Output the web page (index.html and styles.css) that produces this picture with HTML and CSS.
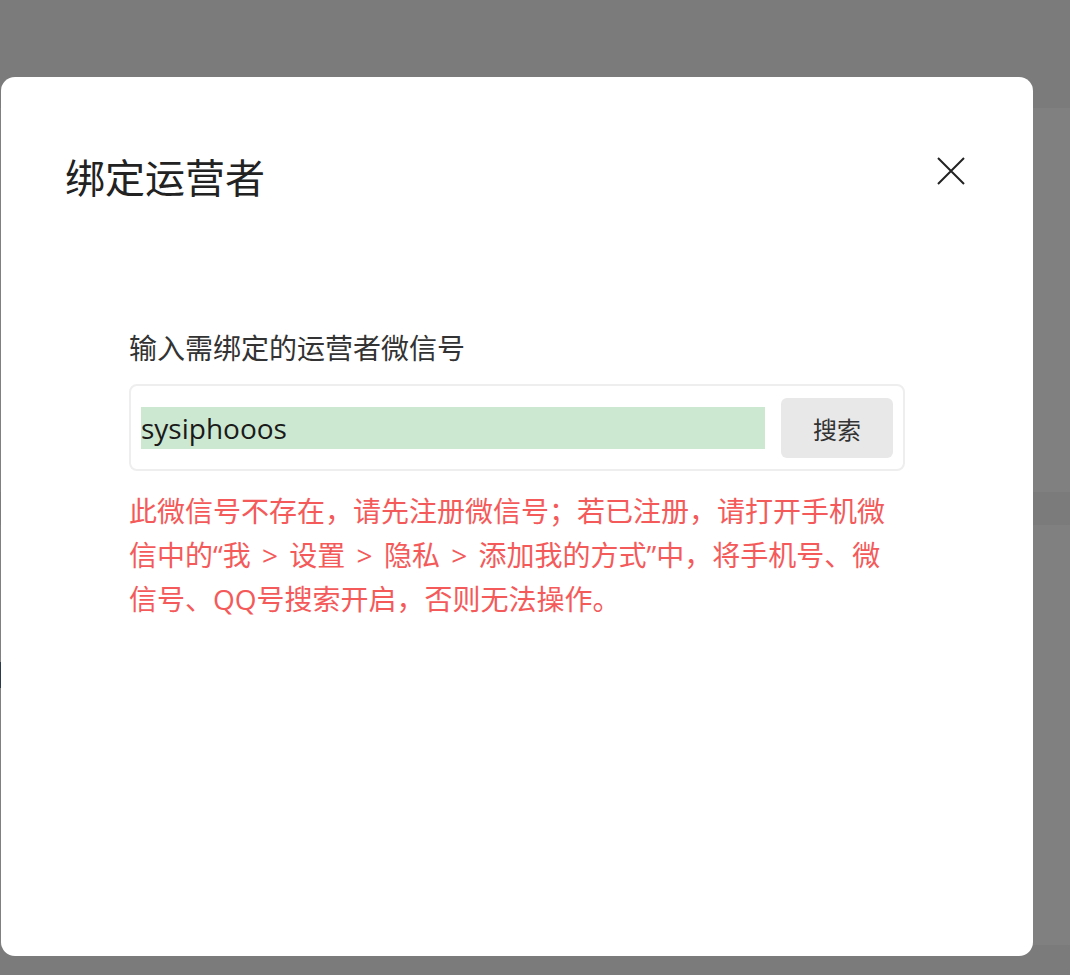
FILE: index.html
```html
<!DOCTYPE html>
<html lang="zh-CN">
<head>
<meta charset="utf-8">
<title>绑定运营者</title>
<link rel="stylesheet" href="styles.css">
</head>
<body>
<div class="page">
  <div class="page-top"></div>
  <div class="page-panel">
    <div class="panel-upper"></div>
    <div class="panel-band"></div>
    <div class="panel-lower"><span class="edge-mark"></span></div>
  </div>
</div>

<div class="modal">
  <div class="modal-header">
    <h2 class="modal-title">绑定运营者</h2>
    <button class="close-btn" aria-label="关闭">
      <svg width="28" height="28" viewBox="0 0 28 28"><path d="M1 1 L27 27 M27 1 L1 27" stroke="#222" stroke-width="2" fill="none"/></svg>
    </button>
  </div>
  <div class="modal-body">
    <div class="field-label">输入需绑定的运营者微信号</div>
    <div class="search-box">
      <input class="search-input" type="text" value="sysiphooos">
      <button class="search-btn">搜索</button>
    </div>
    <p class="error-text">此微信号不存在，请先注册微信号；若已注册，请打开手机微信中的“我 &gt; 设置 &gt; 隐私 &gt; 添加我的方式”中，将手机号、微信号、QQ号搜索开启，否则无法操作。</p>
  </div>
</div>
</body>
</html>
```
FILE: styles.css
```css
* { box-sizing: border-box; }
html, body {
  margin: 0;
  padding: 0;
  background: #7b7b7b;
  font-family: "Open Sans", "Noto Sans CJK SC", sans-serif;
}
.page {
  width: 1070px;
  height: 975px;
  overflow: hidden;
}
.page-top { height: 108px; }
.page-panel {
  height: 837px;
  background: #808080;
  display: flex;
  flex-direction: column;
}
.panel-upper { height: 384px; }
.panel-band { height: 33px; background: #7b7b7b; }
.panel-lower { flex: 1; position: relative; }
.edge-mark {
  position: absolute;
  left: 0;
  top: 137px;
  width: 2px;
  height: 26px;
  background: #2d3a4a;
}
.modal {
  position: fixed;
  left: 1px;
  top: 77px;
  width: 1032px;
  height: 879px;
  background: #fff;
  border-radius: 14px;
  padding: 73px 68px 0 64px;
}
.modal-header {
  display: flex;
  justify-content: space-between;
  align-items: flex-start;
}
.modal-title {
  margin: 0;
  font-size: 40px;
  line-height: 56px;
  font-weight: 400;
  color: #222;
}
.close-btn {
  margin-top: 7px;
  width: 28px;
  height: 28px;
  padding: 0;
  border: 0;
  background: none;
  display: block;
}
.close-btn svg { display: block; }
.modal-body {
  width: 776px;
  margin: 122px 0 0 64px;
}
.field-label {
  font-size: 28px;
  line-height: 40px;
  color: #333;
}
.search-box {
  margin-top: 16px;
  height: 87px;
  border: 2px solid #eeeeee;
  border-radius: 8px;
  padding: 12px 10px 11px;
  display: flex;
  align-items: center;
  gap: 16px;
}
.search-input {
  width: 624px;
  height: 42px;
  border: 0;
  outline: none;
  padding: 0;
  margin: 0;
  background: #cde8d0;
  font-family: "Open Sans", "Noto Sans CJK SC", sans-serif;
  font-size: 28px;
  color: #1a1a1a;
}
.search-btn {
  width: 112px;
  height: 60px;
  border: 0;
  border-radius: 6px;
  background: #e8e8e8;
  font-family: "Open Sans", "Noto Sans CJK SC", sans-serif;
  font-size: 24px;
  color: #333;
  padding: 0;
}
.error-text {
  margin: 18px 0 0;
  font-size: 28px;
  line-height: 44px;
  color: #f45a5a;
  word-spacing: 4px;
}
```
